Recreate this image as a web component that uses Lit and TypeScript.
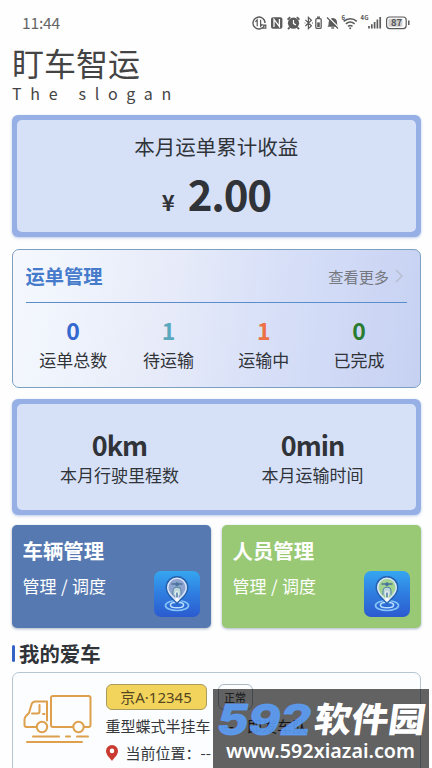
import { LitElement, html, css } from "lit";
import { customElement, property } from "lit/decorators.js";

@customElement("status-icons")
class StatusIcons extends LitElement {
  static styles = css`
    :host { display: block; height: 20px; }
    svg { display: block; }
    text { font-family: "Noto Sans CJK SC", sans-serif; font-weight: 700; fill: #555; }
  `;
  render() {
    return html`<svg width="164" height="20" viewBox="250 13 164 20" fill="none" stroke="#5b5b5b" stroke-width="1.4">
      <path d="M264.6 25.2a6 6 0 1 1 .4-2.2M262.5 27.8a6 6 0 0 1-1.5.9" />
      <path d="M257.2 26.2v-6.4l-1.8 2M260.6 19.8v6.4l1.8-2" stroke-width="1.2" />
      <path d="M262.4 25.2h3.4v3h-3.4" stroke-width="1.2" />
      <rect x="271" y="17.2" width="11.4" height="11.6" rx="2" fill="#5b5b5b" stroke="none" />
      <path d="M274 27v-7.6l5.4 7.2v-7.6" stroke="#fff" stroke-width="1.3" />
      <circle cx="293.5" cy="23.2" r="5.6" fill="#5b5b5b" stroke="none" />
      <path d="M287.6 19.6l2.6-2.4M299.4 19.6l-2.6-2.4M289.6 27.4l-1.6 1.8M297.4 27.4l1.6 1.8" stroke-width="1.8" />
      <path d="M293.5 20v3.6l2.4 1.3" stroke="#fff" stroke-width="1.2" />
      <path d="M305.4 19.8l6 6-3 2.8V17.4l3 2.8-6 5.8M304.6 23h.8M312 23h1" stroke-width="1.2" />
      <rect x="315.8" y="18.6" width="5.4" height="9.8" rx="1.2" stroke-width="1.3" />
      <path d="M317 17.2h3" />
      <rect x="317.2" y="22.4" width="2.6" height="4.6" fill="#5b5b5b" stroke="none" />
      <path d="M327.4 26.8c1.6-1.4 1-3.4 1.3-4.8.5-2.400 1.800-3.600 3.800-4 3.400.2 4.600 2.400 4.600 5 0 1.800.3 2.800 1.300 3.800z" fill="#5b5b5b" stroke="none" />
      <path d="M331.300 28h2.800" />
      <path d="M327.900 16.700l11 11" stroke="#fff" stroke-width="1.300" />
      <path d="M327 17.500l11 11" stroke-width="1.300" />
      <path d="M343.600 21.400c4-3.600 9.400-3.600 13.200 0M345.800 23.900c2.800-2.400 6.200-2.400 8.800 0M348 26.300c1.500-1.100 3.100-1.100 4.500 0" stroke-width="1.500" />
      <circle cx="350.200" cy="28.200" r="1" fill="#5b5b5b" stroke="none" />
      <text x="341.500" y="20.400" font-size="6" stroke="none">6</text>
      <text x="360.600" y="20.400" font-size="6" stroke="none">4G</text>
      <path d="M369 26v2.600M371.800 24.200v4.400M374.600 22v6.600M377.400 19.600v9M380.200 17v11.600" stroke-width="1.700" />
      <rect x="386.600" y="17" width="19.600" height="11.600" rx="3" stroke-width="1.200" />
      <rect x="388.400" y="18.800" width="14" height="8" rx="1.500" fill="#cfcfcf" stroke="none" />
      <path d="M408.800 20.500v4.600" stroke-width="1.500" />
      <text x="391" y="26.400" font-size="9.500" stroke="none">87</text>
    </svg>`;
  }
}

@customElement("pin-tile")
class PinTile extends LitElement {
  @property() fillColor = "#7f9fd0";
  static styles = css`
    :host { display: block; width: 46px; height: 46px; border-radius: 7px; overflow: hidden;
      background: linear-gradient(#35a6f0, #2f7ee0 48%, #2b5bcf); }
    svg { display: block; }
  `;
  render() {
    return html`<svg width="46" height="46" viewBox="0 0 46 46" fill="none">
      <ellipse cx="23" cy="34.500" rx="11.500" ry="5" stroke="#86c4f8" stroke-width="1.700" />
      <ellipse cx="23" cy="34" rx="6.600" ry="2.800" stroke="#b9e0ff" stroke-width="1.600" />
      <path d="M23 33.500C20 29.500 11.500 24.500 11.500 16.500a11.500 11.500 0 0 1 23 0C34.500 24.500 26 29.500 23 33.500z" fill="#2562ae" />
      <path d="M23 31.500C20.500 28 13 23.500 13 16.500a10 10 0 0 1 20 0C33 23.500 25.500 28 23 31.500z" fill="#d9e6fa" />
      <path d="M23 29C20.500 26 14.500 22 14.500 16.500a8.500 8.500 0 0 1 17 0C31.500 22 25.500 26 23 29z" fill=${this.fillColor} />
      <path d="M17.500 13h4l1.500-1 1.500 1h4" stroke="#4a749c" stroke-width="1.500" />
      <circle cx="23" cy="13.500" r="1.800" fill="#4a749c" />
      <path d="M19 24v-4c0-5 8-5 8 0v4" stroke="#5889a5" stroke-width="1.100" fill="#bfd6db" />
      <path d="M23 20.500V30" stroke="#fff" stroke-width="3" />
      <path d="M23 21.500v5" stroke="#245d92" stroke-width="1.300" />
    </svg>`;
  }
}

@customElement("app-root")
class AppRoot extends LitElement {
  private stats = [
    { n: "0", label: "运单总数", cls: "blue" },
    { n: "1", label: "待运输", cls: "teal" },
    { n: "1", label: "运输中", cls: "orange" },
    { n: "0", label: "已完成", cls: "green" },
  ];
  static styles = css`
    :host { display: block; position: relative; box-sizing: border-box; width: 432px; height: 768px; overflow: hidden;
      background: #fefefe; color: #303338; font-family: "Noto Sans CJK SC", sans-serif; }
    * { box-sizing: border-box; }
    .status { display: flex; justify-content: space-between; height: 43px; padding: 13px 18px 0 22px; }
    .time { font-size: 15.600px; line-height: 18px; letter-spacing: -.2px; color: #666; }
    .title { padding-left: 12px; font-size: 32px; line-height: 38px; height: 38px; color: #444; }
    .slogan { padding-left: 12px; font-size: 16px; line-height: 25px; height: 34px; letter-spacing: 8.700px; color: #444; white-space: pre; }
    .page { display: flex; flex-direction: column; padding: 0 11px 0 11.500px; }
    .framed { border: 5.500px solid #96afe4; border-radius: 6px; background: #96afe4; box-shadow: 0 1px 3px #bccbeb; }
    .inner { height: 100%; border-radius: 5px; background: #d6e1f8; }
    .income { height: 122px; }
    .income .inner { display: flex; flex-direction: column; align-items: center; padding-top: 10px; }
    .caption { font-size: 20.500px; line-height: 32px; }
    .amount { display: flex; align-items: baseline; gap: 13px; line-height: 62px; font-weight: 700; font-size: 42px; letter-spacing: -1.300px; }
    .yen { font-size: 22px; letter-spacing: 0; }
    .orders { margin-top: 12px; height: 139px; border: 1px solid #7d9fc0; border-radius: 7px; padding: 0 13px;
      background: linear-gradient(100deg, #f5f9fe, #e7ebf9 38%, #d8e0f8 62%, #c6d1f2); }
    .head { display: flex; justify-content: space-between; align-items: center; height: 53px; padding-bottom: 1px; border-bottom: 1.500px solid #5c8dcb; }
    .head b { font-size: 19.300px; color: #467bcb; }
    .more { display: flex; align-items: center; gap: 6px; font-size: 15.200px; color: #75787f; padding-right: 4px; }
    .stats { display: grid; grid-template-columns: repeat(4, 95.300px); padding-top: 12px; }
    .stat { display: flex; flex-direction: column; align-items: center; font-size: 17px; line-height: 28px; }
    .stat b { font-size: 23px; line-height: 31px; }
    .blue { color: #3568cf; } .teal { color: #5aa8bd; } .orange { color: #ec7144; } .green { color: #2a7c30; }
    .month { margin-top: 11px; height: 116px; }
    .month .inner { display: grid; grid-template-columns: 206px 180px; padding-top: 23px; }
    .metric { display: flex; flex-direction: column; align-items: center; font-size: 17px; line-height: 23px; }
    .metric b { font-size: 27px; line-height: 36px; letter-spacing: -1px; }
    .tiles { display: grid; grid-template-columns: 199px 199.500px; gap: 11px; margin-top: 10px; }
    .tile { display: flex; justify-content: space-between; height: 103px; border-radius: 5px; padding: 9px 11px 0 11px; color: #fff;
      box-shadow: 0 1px 3px #aab4c5; background: #5779b1; }
    .tile.leaf { background: #99c974; }
    .tile b { display: block; font-size: 20.400px; line-height: 32px; }
    .tile span { display: block; font-size: 17px; line-height: 24px; margin-top: 8px; word-spacing: .6px; }
    .tile pin-tile { margin-top: 37px; }
    .section { display: flex; align-items: center; gap: 4px; height: 30px; margin-top: 10px; font-size: 20.400px; font-weight: 700; }
    .bar { width: 3.500px; height: 17px; border-radius: 2px; background: #3564c6; }
    .car { display: flex; height: 130px; margin-top: 4px; border: 1px solid #b5c6d2; border-radius: 7px; background: #fbfdff; }
    .truck { width: 93px; padding: 20px 0 0 10.500px; }
    .info { display: flex; flex-direction: column; color: #36383b; }
    .row { display: flex; align-items: center; white-space: pre; }
    .tags { height: 27px; margin-top: 10px; gap: 11px; }
    .plate { width: 101px; height: 26px; border: 1px solid #a99a5e; border-radius: 6px; background: #f2d35c; text-align: center;
      font: 15px/24px "Noto Sans", "Noto Sans CJK SC", sans-serif; color: #55471f; }
    .ok { width: 35px; height: 26px; border: 1px solid #aab8c4; border-radius: 6px; text-align: center; font-size: 11px; line-height: 24px; }
    .model { height: 30px; font-size: 15px; gap: 13px; }
    .place { height: 25px; font-size: 15px; }
    .place svg { margin-right: 8px; }
    .mark { position: absolute; left: 213px; top: 689px; width: 216px; height: 79px; background: rgba(0, 0, 0, .61); }
    .mark svg { display: block; }
    .num { font: italic 800 42px Inter, sans-serif; fill: #5c9ffa; fill-opacity: .88; stroke: #5c9ffa; stroke-opacity: .7; stroke-width: 1px; }
    .soft { font: 900 34.500px "Noto Sans CJK SC", sans-serif; fill: #fff; }
    .url { font: 600 20px "Noto Sans", sans-serif; fill: #fff; }
  `;
  render() {
    return html`
      <div class="status"><span class="time">11:44</span><status-icons></status-icons></div>
      <div class="title">盯车智运</div>
      <div class="slogan">The slogan</div>
      <div class="page">
        <div class="framed income"><div class="inner">
          <div class="caption">本月运单累计收益</div>
          <div class="amount"><span class="yen">¥</span><span>2.00</span></div>
        </div></div>
        <div class="orders">
          <div class="head"><b>运单管理</b><span class="more">查看更多
            <svg width="8" height="14" viewBox="0 0 8 14" fill="none" stroke="#b7bfd0" stroke-width="1.500"><path d="M1 1l6 6-6 6" /></svg></span></div>
          <div class="stats">${this.stats.map((s) => html`<div class="stat"><b class=${s.cls}>${s.n}</b>${s.label}</div>`)}</div>
        </div>
        <div class="framed month"><div class="inner">
          <div class="metric"><b>0km</b>本月行驶里程数</div>
          <div class="metric"><b>0min</b>本月运输时间</div>
        </div></div>
        <div class="tiles">
          <div class="tile"><div><b>车辆管理</b><span>管理 / 调度</span></div><pin-tile .fillColor=${"#8fa3cf"}></pin-tile></div>
          <div class="tile leaf"><div><b>人员管理</b><span>管理 / 调度</span></div><pin-tile .fillColor=${"#a4d391"}></pin-tile></div>
        </div>
        <div class="section"><i class="bar"></i>我的爱车</div>
        <div class="car">
          <div class="truck">
            <svg width="70" height="52" viewBox="23 693 70 52" fill="none" stroke="#dea04c" stroke-width="2" stroke-linecap="round" stroke-linejoin="round">
              <path d="M72.500 727H53q-2 0-2-2V698q0-2 2-2h35.500q2 0 2 2v27q0 2-2 2h-4M47 720.500V701.500H35.500q-3 0-4 3l-2.500 8.500-3 3q-1.500 1.500-1.500 3.500v5.500q0 2 2 2h9.500" />
              <path d="M39.500 705v6.500q0 2-2 2H32M43 714h1.500" />
              <circle cx="42" cy="727" r="5.200" /><circle cx="78.500" cy="727" r="5.200" />
              <path d="M33 736.500h26M66 736.500h4M77 736.500h11M27 742h55" />
            </svg>
          </div>
          <div class="info">
            <div class="row tags"><span class="plate">京A·12345</span><span class="ok">正常</span></div>
            <div class="row model"><span>重型蝶式半挂车</span><span>--</span><span>即发车队</span></div>
            <div class="row place"><svg width="12" height="16" viewBox="0 0 12 16"><path fill="#cb3a31" fill-rule="evenodd" d="M6 0a6 6 0 0 1 6 6c0 4-4 7-6 10C4 13 0 10 0 6a6 6 0 0 1 6-6zm0 3.600a2.300 2.300 0 1 0 0 4.600 2.300 2.300 0 0 0 0-4.600z" /></svg>当前位置：--</div>
          </div>
        </div>
      </div>
      <div class="mark"><svg width="216" height="79" viewBox="0 0 216 79">
        <text class="num" x="4" y="45.500" textLength="94" lengthAdjust="spacingAndGlyphs">592</text>
        <text class="soft" transform="translate(100 42.500) skewX(-8)" textLength="111" lengthAdjust="spacingAndGlyphs">软件园</text>
        <text class="url" x="13" y="68.500" textLength="189" lengthAdjust="spacingAndGlyphs">www.592xiazai.com</text>
      </svg></div>`;
  }
}
